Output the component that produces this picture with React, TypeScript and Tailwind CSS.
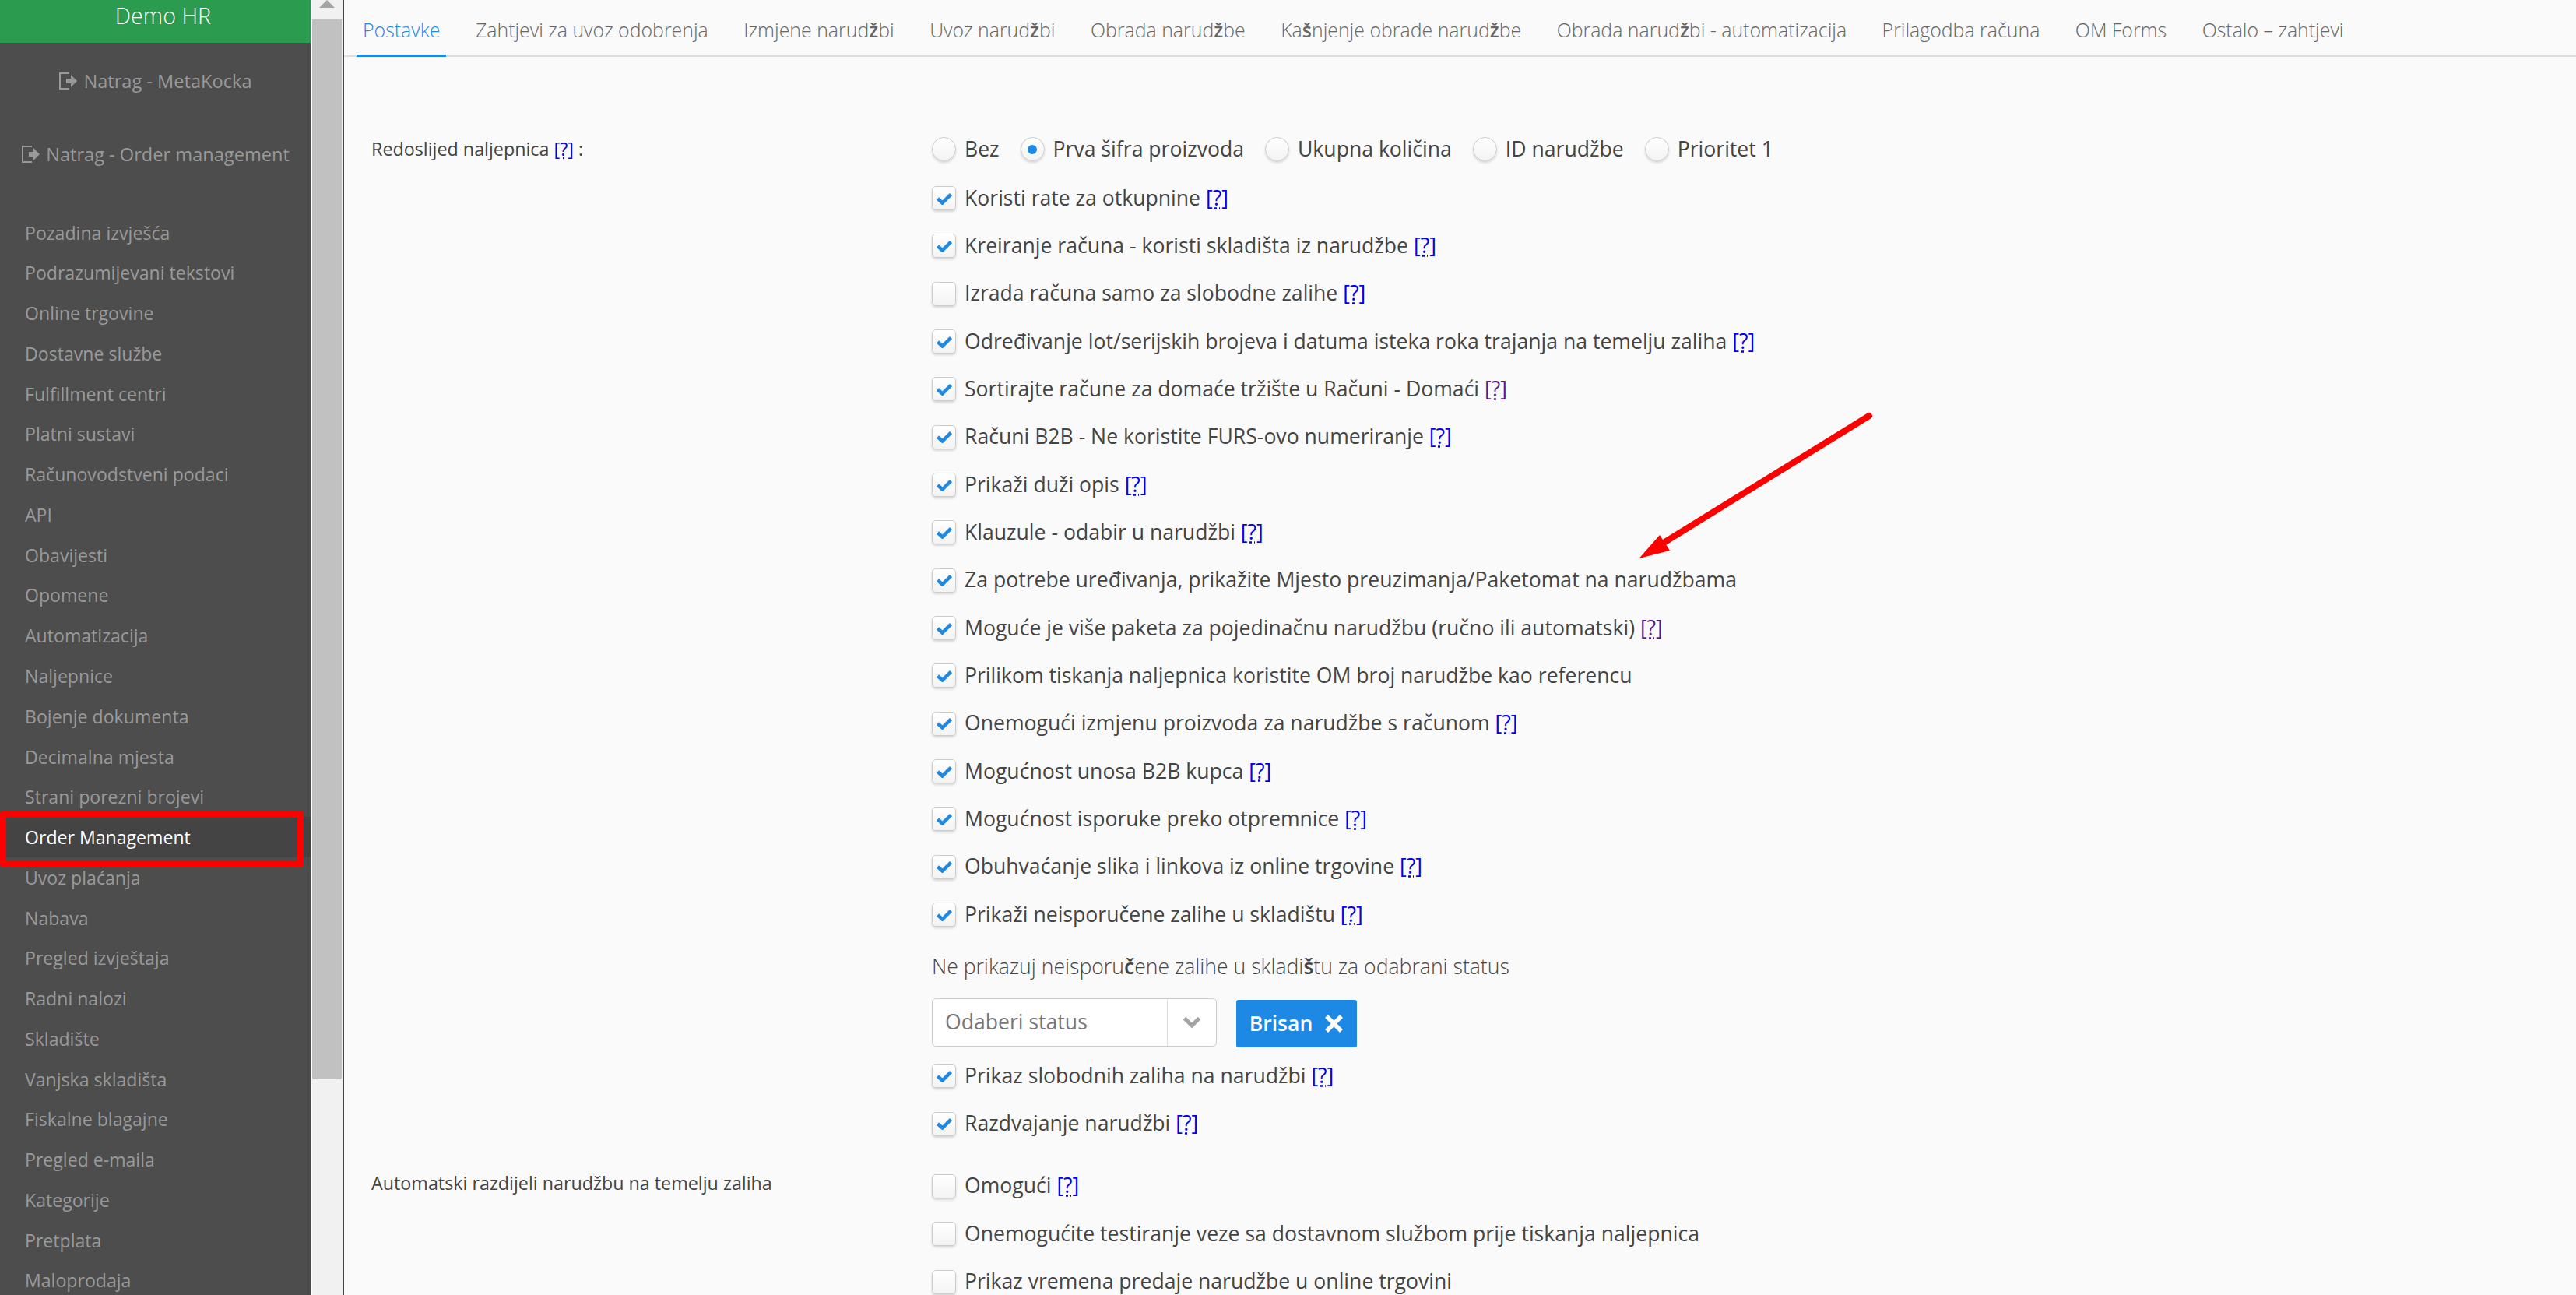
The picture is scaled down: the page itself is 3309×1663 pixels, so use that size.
import React from 'react';

const sidebarItems = [
  'Pozadina izvješća',
  'Podrazumijevani tekstovi',
  'Online trgovine',
  'Dostavne službe',
  'Fulfillment centri',
  'Platni sustavi',
  'Računovodstveni podaci',
  'API',
  'Obavijesti',
  'Opomene',
  'Automatizacija',
  'Naljepnice',
  'Bojenje dokumenta',
  'Decimalna mjesta',
  'Strani porezni brojevi',
  'Order Management',
  'Uvoz plaćanja',
  'Nabava',
  'Pregled izvještaja',
  'Radni nalozi',
  'Skladište',
  'Vanjska skladišta',
  'Fiskalne blagajne',
  'Pregled e-maila',
  'Kategorije',
  'Pretplata',
  'Maloprodaja',
];

// the light face has no ž/š/č in the original, those letters come out heavier
const B = ({ children }: { children: React.ReactNode }) => <b className="font-semibold">{children}</b>;

const tabs: React.ReactNode[] = [
  'Postavke',
  'Zahtjevi za uvoz odobrenja',
  <>Izmjene narud<B>ž</B>bi</>,
  <>Uvoz narud<B>ž</B>bi</>,
  <>Obrada narud<B>ž</B>be</>,
  <>Ka<B>š</B>njenje obrade narud<B>ž</B>be</>,
  <>Obrada narud<B>ž</B>bi - automatizacija</>,
  'Prilagodba računa',
  'OM Forms',
  'Ostalo – zahtjevi',
];

function LogOutIcon() {
  return (
    <svg width="24" height="24" viewBox="0 0 24 24" className="inline-block mr-2 align-[-3px]" fill="#999">
      <path d="M1 1h13v2H3v18h11v2H1z" />
      <path d="M10 9h6V4l8 8-8 8v-5h-6z" />
    </svg>
  );
}

function Help({ visited }: { visited?: boolean }) {
  return (
    <span className={`underline decoration-dotted ${visited ? 'text-[#551a8b]' : 'text-[#0000ee]'}`}>[?]</span>
  );
}

function Check({ checked }: { checked: boolean }) {
  return (
    <span className="w-[31px] h-[31px] shrink-0 rounded-[5px] border border-[#ccc] bg-gradient-to-b from-white to-[#f3f3f3] shadow-[0_2px_3px_rgba(0,0,0,0.15)] flex items-center justify-center">
      {checked && (
        <svg width="20" height="16" viewBox="0 0 20 16">
          <path d="M1.5 8L7.5 13.5L18.5 2.5" fill="none" stroke="#1e88e5" strokeWidth="4.5" />
        </svg>
      )}
    </span>
  );
}

function Radio({ checked, label }: { checked: boolean; label: string }) {
  return (
    <span className="flex items-center gap-[11px] mr-[27px]">
      <span className="w-[31px] h-[31px] rounded-full border border-[#ccc] bg-gradient-to-b from-white to-[#f3f3f3] shadow-[0_2px_3px_rgba(0,0,0,0.15)] flex items-center justify-center">
        {checked && <span className="w-3 h-3 rounded-full bg-[#1e88e5]" />}
      </span>
      {label}
    </span>
  );
}

function Row({ checked, children }: { checked: boolean; children: React.ReactNode }) {
  return (
    <div className="h-[61.33px] flex items-center gap-[11px]">
      <Check checked={checked} />
      <span>{children}</span>
    </div>
  );
}

export default function App() {
  return (
    <div className="h-[1663px] w-[3309px] overflow-hidden flex bg-white font-['Open_Sans',sans-serif] relative">
      <aside className="w-[399px] shrink-0 bg-[#4d4d4d] text-[#999] text-[23.1px]">
        <div className="h-[55px] bg-[#2b9b4f] text-white font-light text-[28.7px] flex items-center justify-center pl-[20px] pb-[16px]">Demo HR</div>
        <div className="h-[100px] flex items-center justify-center text-[23.6px]"><span><LogOutIcon />Natrag - MetaKocka</span></div>
        <div className="h-[87px] flex items-center justify-center text-[23.6px]"><span><LogOutIcon />Natrag - Order management</span></div>
        <nav className="mt-[31px]">
          {sidebarItems.map((item) => (
            <div
              key={item}
              className={`h-[51.77px] flex items-center pl-[32px] ${item === 'Order Management' ? 'bg-[#444] text-white font-medium' : ''}`}
            >
              {item}
            </div>
          ))}
        </nav>
      </aside>
      <div className="absolute left-0 top-[1042px] w-[390px] h-[71px] border-[8px] border-[#ff0000] rounded-[3px]" />
      <div className="w-[40px] ml-[2px] shrink-0 bg-[#f1f1f1] relative">
        <div className="absolute left-[9px] top-0 w-0 h-0 border-x-[10px] border-x-transparent border-b-[10px] border-b-[#a3a3a3]" />
        <div className="mt-[25px] w-[38px] h-[1361px] bg-[#c1c1c1]" />
      </div>
      <main className="flex-1 border-l border-[#444] bg-[#fafafa] text-[#444]">
        <div className="flex h-[73px] pl-[16px] border-b-2 border-[#ddd] font-light text-[#666] text-[24.9px]">
          {tabs.map((tab, i) => (
            <div key={i} className={`px-2 mr-[29.5px] pt-[20px] h-[73px] whitespace-nowrap ${i === 0 ? 'text-[#1e88e5] border-b-[3px] border-[#1e88e5]' : ''}`}>
              {tab}
            </div>
          ))}
        </div>
        <div className="flex pt-[88px] text-[26.6px]">
          <div className="w-[755px] pl-[35px] text-[23.3px] pt-[13px] shrink-0">
            Redoslijed naljepnica <Help /> :
          </div>
          <div>
            <div className="h-[63px] flex items-center pb-[1px]">
              <Radio checked={false} label="Bez" />
              <Radio checked label="Prva šifra proizvoda" />
              <Radio checked={false} label="Ukupna količina" />
              <Radio checked={false} label="ID narudžbe" />
              <Radio checked={false} label="Prioritet 1" />
            </div>
            <Row checked>Koristi rate za otkupnine <Help /></Row>
            <Row checked>Kreiranje računa - koristi skladišta iz narudžbe <Help /></Row>
            <Row checked={false}>Izrada računa samo za slobodne zalihe <Help /></Row>
            <Row checked>Određivanje lot/serijskih brojeva i datuma isteka roka trajanja na temelju zaliha <Help /></Row>
            <Row checked>Sortirajte račune za domaće tržište u Računi - Domaći <Help visited /></Row>
            <Row checked>Računi B2B - Ne koristite FURS-ovo numeriranje <Help /></Row>
            <Row checked>Prikaži duži opis <Help /></Row>
            <Row checked>Klauzule - odabir u narudžbi <Help /></Row>
            <Row checked>Za potrebe uređivanja, prikažite Mjesto preuzimanja/Paketomat na narudžbama</Row>
            <Row checked>Moguće je više paketa za pojedinačnu narudžbu (ručno ili automatski) <Help visited /></Row>
            <Row checked>Prilikom tiskanja naljepnica koristite OM broj narudžbe kao referencu</Row>
            <Row checked>Onemogući izmjenu proizvoda za narudžbe s računom <Help /></Row>
            <Row checked>Mogućnost unosa B2B kupca <Help /></Row>
            <Row checked>Mogućnost isporuke preko otpremnice <Help /></Row>
            <Row checked>Obuhvaćanje slika i linkova iz online trgovine <Help /></Row>
            <Row checked>Prikaži neisporučene zalihe u skladištu <Help /></Row>
            <div className="h-[72.8px] flex items-center font-light">
              <span>Ne prikazuj neisporu<B>č</B>ene zalihe u skladi<B>š</B>tu za odabrani status</span>
            </div>
            <div className="h-[70px] mb-[3px] flex items-center gap-[25px]">
              <div className="w-[366px] h-[62px] rounded-[5px] border border-[#ccc] bg-white flex items-center text-[#777]">
                <span className="flex-1 pl-[16px]">Odaberi status</span>
                <span className="w-[63px] h-full border-l border-[#ddd] flex items-center justify-center">
                  <svg width="24" height="16" viewBox="0 0 24 16"><path d="M2.5 2.5L12 12L21.5 2.5" fill="none" stroke="#a3a3a3" strokeWidth="5" /></svg>
                </span>
              </div>
              <div className="w-[155px] h-[61px] mt-[3px] rounded-[3px] bg-[#1e88e5] text-white font-semibold flex items-center justify-center gap-[15px]">
                Brisan
                <svg width="25" height="25" viewBox="0 0 25 25"><path d="M3 3l19 19M22 3L3 22" fill="none" stroke="white" strokeWidth="5.5" /></svg>
              </div>
            </div>
            <Row checked>Prikaz slobodnih zaliha na narudžbi <Help /></Row>
            <Row checked>Razdvajanje narudžbi <Help /></Row>
          </div>
        </div>
        <div className="flex pt-[19px] text-[26.6px]">
          <div className="w-[755px] pl-[35px] text-[23.3px] pt-[9px] shrink-0">Automatski razdijeli narudžbu na temelju zaliha</div>
          <div>
            <Row checked={false}>Omogući <Help /></Row>
            <Row checked={false}>Onemogućite testiranje veze sa dostavnom službom prije tiskanja naljepnica</Row>
            <Row checked={false}>Prikaz vremena predaje narudžbe u online trgovini</Row>
          </div>
        </div>
      </main>
      {/* annotation arrow drawn over the page */}
      <svg className="absolute left-[2090px] top-[520px]" width="330" height="210" viewBox="0 0 330 210">
        <path d="M311 14L47 177" stroke="#ff0000" strokeWidth="8" strokeLinecap="round" fill="none" />
        <path d="M15.5 197L42 167L55 187Z" fill="#ff0000" />
      </svg>
    </div>
  );
}
